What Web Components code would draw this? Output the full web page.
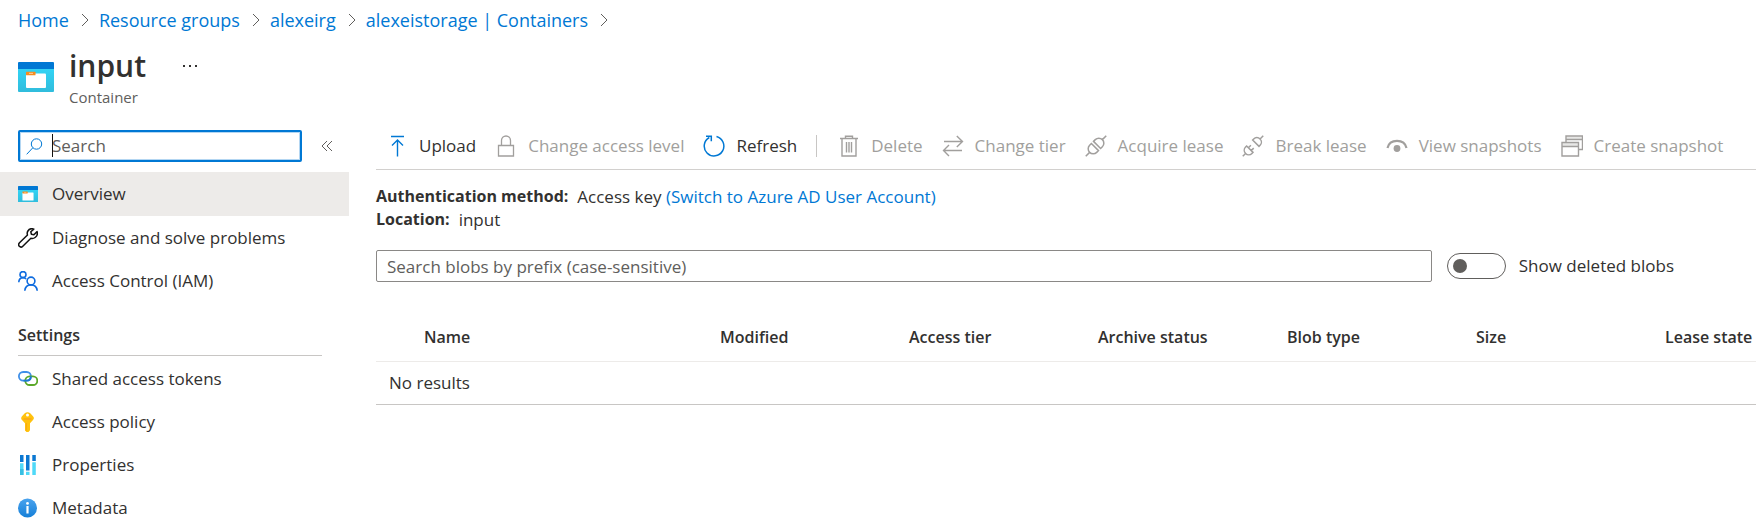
<!DOCTYPE html>
<html lang="en">
<head>
<meta charset="utf-8">
<title>input - Container</title>
<style>
html { scrollbar-width: none; }
body { margin: 0; background: #fff; color: #323130; font: 17px/24px "Open Sans", "Noto Sans", sans-serif; }
</style>
</head>
<body>
<portal-page></portal-page>
<script>
const ICONS = {
  container: ['0 0 36 30', `<defs><linearGradient id="g" x2="0" y2="1"><stop stop-color="#32d4f5"/><stop offset="1" stop-color="#30bcdc"/></linearGradient></defs><g stroke="none"><rect y="6" width="36" height="24" rx="1" fill="url(#g)"/><path d="M1 0h34a1 1 0 0 1 1 1v6H0V1a1 1 0 0 1 1-1z" fill="#0078d4"/><path d="M17 11.500H27a1 1 0 0 1 1 1V25a1 1 0 0 1-1 1H9a1 1 0 0 1-1-1V12z" fill="#fff"/><rect x="8" y="9.700" width="9.500" height="3.600" rx=".6" fill="#f78d1e"/><path d="M11 10.800h4v1.200h-4z" fill="#fcc48a"/></g>`],
  search: ['0 0 17 17', `<circle cx="10.500" cy="6" r="5.200"/><path d="M6.800 9.800.7 16.300"/>`],
  collapse: ['0 0 12 12', `<path d="M6 1 1 6l5 5M11 1 6 6l5 5"/>`],
  chevron: ['0 0 8 14', `<path d="M1 1l6 6-6 6"/>`],
  dots: ['0 0 16 4', `<g fill="currentColor" stroke="none"><rect x="1" y="1" width="2" height="2"/><rect x="7" y="1" width="2" height="2"/><rect x="13" y="1" width="2" height="2"/></g>`],
  wrench: ['0 0 20 20', `<g stroke-width="1.500" stroke-linejoin="round"><path d="M15.800 1.100c-2.200-.8-4.700-.1-5.900 1.900-.8 1.300-.9 2.700-.4 4L1.500 14.700c-1.200 1.200-1 2.800-.2 3.600.9.900 2.400 1 3.500-.1l8.100-7.900c1.400.4 3 .1 4.200-.8 2-1.400 2.700-3.600 2-5.900l-3.200 3.100-2.500-.5-.6-2.400z"/></g>`],
  people: ['0 0 20 20', `<g stroke="#0f6cdf" stroke-width="1.600"><circle cx="5" cy="3.600" r="3"/><path d="M.8 11.200c0-2.700 1.700-4.600 4.200-4.600 1.300 0 2.400.5 3.100 1.400"/><circle cx="13" cy="10" r="3.900"/><path d="M6.800 19.800c.3-3.500 2.800-5.900 6.200-5.900s5.900 2.400 6.200 5.900"/></g>`],
  link: ['0 0 20 15', `<g stroke-width="1.800"><rect x=".9" y="1" width="12" height="8.600" rx="4.300" stroke="#3f8fe8"/><rect x="7.300" y="5.400" width="12" height="8.600" rx="4.300" stroke="#5ba829"/><path d="M12.900 5.300c0 2.700-1.600 4.300-4 4.300H5.500" stroke="#1b78d4"/></g>`],
  key: ['0 0 20 20', `<g stroke="none"><path d="M6.500 1.500Q9.500-1 12.500 1.500L15 4.200q1.800 1.800 0 3.800L12 11.300v7L10.500 20h-2L7 18.500v-7.200L4 8Q2.300 6.200 4 4.300z" fill="#ffc20e"/><path d="M5.500 6.300h8v1.400h-8z" fill="#f9a21a"/><path d="M7.800 11h1.200v7.500H7.800z" fill="#f79b12" opacity=".6"/><circle cx="9.500" cy="2.900" r="1.500" fill="#fff"/></g>`],
  properties: ['0 0 20 20', `<g stroke="none"><path d="M2 0h3.500v7H2zM8 0h3.500v15.500H8zM14.300 0h3.500v6h-3.500z" fill="#0b78d2"/><path d="M2 8.300h3.500V20H2zM14.300 7.300h3.500V20h-3.500zM8 16.800h3.500V20H8z" fill="#4fd9f8"/><path d="M2 14h3.500v6H2z" fill="#38bfe2"/></g>`],
  info: ['0 0 20 20', `<defs><linearGradient id="g" x2="0" y2="1"><stop stop-color="#4aa3ee"/><stop offset="1" stop-color="#157fd8"/></linearGradient></defs><g stroke="none"><circle cx="9.500" cy="10" r="9.500" fill="url(#g)"/><circle cx="9.500" cy="5.400" r="1.400" fill="#fff"/><path d="M8.400 8h2.200v7.500H8.400z" fill="#fff"/></g>`],
  upload: ['0 0 22 22', `<path d="M5 1.500h13M11.500 21.500V5M6 10.500 11.500 5l5.500 5.500" stroke-width="1.400"/>`],
  lock: ['0 0 22 22', `<path d="M3.500 10.500h15v10.500h-15zM6.500 10.500V5.500a4.500 4.500 0 0 1 9 0v5" stroke-width="1.300"/>`],
  refresh: ['0 0 22 22', `<path d="M13.500 1.600A9.800 9.800 0 1 1 6.300 2.500M3 1.200h5.300v5" stroke-width="1.500"/>`],
  trash: ['0 0 22 22', `<path d="M2 3.500h18M7.500 3.500V1.200h7v2.300M4 3.500V21h14V3.500M8.500 7v10.500M11 7v10.500M13.500 7v10.500" stroke-width="1.400"/>`],
  swap: ['0 0 22 22', `<path d="M2 6.500h18.500M14.800.9l5.700 5.600-5.700 5.500M20 15.500H1.500M7 10l-5.500 5.500L7 21" stroke-width="1.400"/>`],
  plug: ['0 0 22 22', `<g transform="rotate(-45 11 11)" stroke-width="1.500"><path d="M9.500 6H7a5 5 0 0 0 0 10h2.500zM12.500 6H15a5 5 0 0 1 0 10h-2.500zM-3.500 11H2M20 11h5.500"/></g>`],
  unplug: ['0 0 22 22', `<g transform="rotate(-45 11 11)" stroke-width="1.500"><path d="M6.500 6.500H5a4.500 4.500 0 0 0 0 9h1.500zM15 6.500h1.500a4.500 4.500 0 0 1 0 9H15zM-3.500 11H.5M21 11h4.500M6.500 9H10M6.500 13H10"/></g>`],
  eye: ['0 0 22 22', `<path d="M1.500 13C2.500 8.400 6.200 5.800 11 5.800s8.500 2.600 9.500 7.200" stroke-width="2.200"/><circle cx="11" cy="13.500" r="3.400" fill="currentColor" stroke="none"/>`],
  windows: ['0 0 22 22', `<path d="M1 7.500h16.500V21H1zM1 11.500h16.500M5 7.500V1h16.500v13.500h-4M5 4.500h16.500" stroke-width="1.400"/><path d="M1.500 8h15.500v3H1.500zM5.500 1.500h15.500V4H5.500z" fill="currentColor" stroke="none" opacity=".25"/>`]
};

const define = (name, html, setup) => {
  const template = document.createElement('template');
  template.innerHTML = html;
  customElements.define(name, class extends HTMLElement {
    constructor() {
      super();
      this.attachShadow({ mode: 'open' }).append(template.content.cloneNode(true));
    }
    connectedCallback() { if (setup) setup(this, this.shadowRoot); }
  });
};

define('az-icon', `<style>
:host { display: block; flex: none; line-height: 0; }
svg { display: block; width: 100%; }
</style><span></span>`, (host, root) => {
  const [box, body] = ICONS[host.getAttribute('name')];
  root.querySelector('span').innerHTML = `<svg viewBox="${box}" fill="none" stroke="currentColor" aria-hidden="true">${body}</svg>`;
});

// Puts the icon named by the host's "icon" attribute in front of its label.
const leadIcon = (host, target) => {
  if (target.querySelector('az-icon')) return;
  const icon = document.createElement('az-icon');
  icon.setAttribute('name', host.getAttribute('icon'));
  target.prepend(icon);
};

define('az-crumb', `<style>
:host { display: flex; align-items: center; gap: 12px; }
a { color: #0078d4; text-decoration: none; white-space: nowrap; }
az-icon { width: 8px; color: #605e5c; }
</style><a href="#"><slot></slot></a><az-icon name="chevron"></az-icon>`);

define('az-breadcrumb', `<style>
:host { display: block; }
nav { display: flex; gap: 10px; padding: 8px 18px; font-size: 18px; }
</style><nav aria-label="Breadcrumb"><slot></slot></nav>`);

define('az-title', `<style>
:host { display: flex; gap: 15px; padding: 6px 18px 0; }
az-icon.logo { width: 36px; margin-top: 16px; }
h1 { margin: 0; font-size: 30px; line-height: 40px; font-weight: 600; }
p { margin: 0; font-size: 15px; line-height: 22px; color: #605e5c; }
button { align-self: flex-start; margin: 14px 0 0 21px; padding: 4px 0; border: 0; background: none; color: #323130; }
button az-icon { width: 16px; }
</style><az-icon class="logo" name="container"></az-icon>
<div><h1><slot></slot></h1><p><slot name="kind"></slot></p></div>
<button aria-label="More"><az-icon name="dots"></az-icon></button>`);

define('az-menu-search', `<style>
:host { display: flex; align-items: center; justify-content: space-between; padding: 0 16px 0 18px; }
label { position: relative; display: flex; align-items: center; box-sizing: border-box; width: 284px; height: 32px; border: 2px solid #0078d4; border-radius: 2px; box-shadow: inset 0 0 0 1px #b3d6f2; padding-left: 6px; gap: 9px; }
label az-icon { width: 17px; color: #0078d4; }
input { flex: 1; min-width: 0; border: 0; padding: 0; outline: 0; background: none; font: inherit; color: #323130; }
input::placeholder { color: #605e5c; opacity: 1; }
.caret { position: absolute; left: 32px; top: 2px; width: 1px; height: 23px; background: #111; }
button { border: 0; background: none; padding: 0; color: #605e5c; }
button az-icon { width: 12px; }
</style><label><az-icon name="search"></az-icon><input type="text" placeholder="Search" aria-label="Search menu"><span class="caret"></span></label>
<button aria-label="Collapse menu"><az-icon name="collapse"></az-icon></button>`);

define('az-menu-item', `<style>
:host { display: block; }
a { display: flex; align-items: center; gap: 14px; height: 43px; padding: 0 18px; color: inherit; text-decoration: none; white-space: nowrap; }
az-icon { width: 20px; color: #111; }
:host([selected]) a { height: 44px; background: #edebe9; }
</style><a href="#"><slot></slot></a>`, (host, root) => leadIcon(host, root.querySelector('a')));

define('az-menu', `<style>
:host { display: block; }
nav { padding-top: 10px; }
h2 { margin: 21px 27px 1px 18px; padding-bottom: 8px; border-bottom: 1px solid #c8c6c4; font-size: 16px; line-height: 24px; font-weight: 600; }
</style><az-menu-search></az-menu-search>
<nav><slot></slot><h2>Settings</h2><slot name="settings"></slot></nav>`);

define('az-command', `<style>
:host { display: block; flex: none; }
button { display: flex; align-items: center; gap: 11px; border: 0; padding: 0; background: none; font: inherit; color: #323130; white-space: nowrap; }
az-icon { width: 22px; color: #0078d4; }
button:disabled, button:disabled az-icon { color: #a19f9d; }
</style><button><slot></slot></button>`, (host, root) => {
  const button = root.querySelector('button');
  leadIcon(host, button);
  button.disabled = host.hasAttribute('disabled');
});

define('az-toolbar', `<style>
:host { display: flex; align-items: center; gap: 19px; height: 47px; padding-left: 10px; border-bottom: 1px solid #d2d0ce; }
</style><slot></slot>`);

define('az-divider', `<style>:host { display: block; width: 1px; height: 22px; margin-right: 2px; background: #c8c6c4; }</style>`);

define('az-facts', `<style>
:host { display: block; padding-top: 15px; line-height: 23px; }
dl, dd { margin: 0; }
div { display: flex; gap: 9px; }
dt { font-size: 16px; font-weight: 700; }
a { color: #0078d4; text-decoration: none; }
</style><dl><div><dt>Authentication method:</dt><dd>Access key <a href="#">(Switch to Azure AD User Account)</a></dd></div>
<div><dt>Location:</dt><dd>input</dd></div></dl>`);

define('az-toggle', `<style>
:host { display: block; }
label { display: flex; align-items: center; gap: 13px; white-space: nowrap; }
input { appearance: none; display: grid; align-items: center; box-sizing: border-box; width: 59px; height: 26px; margin: 0; padding: 0 5px; border: 1px solid #605e5c; border-radius: 13px; }
input::before { content: ""; width: 14px; height: 14px; border-radius: 50%; background: #605e5c; }
input:checked::before { justify-self: end; }
</style><label><input type="checkbox" role="switch"><slot></slot></label>`);

define('blob-filter', `<style>
:host { display: flex; align-items: center; gap: 15px; padding: 19px 82px 0 0; }
.prefix { flex: 1; min-width: 0; box-sizing: border-box; height: 32px; border: 1px solid #8a8886; border-radius: 2px; padding: 0 10px; font: inherit; color: #323130; }
.prefix::placeholder { color: #605e5c; opacity: 1; }
</style><input class="prefix" type="text" placeholder="Search blobs by prefix (case-sensitive)" aria-label="Search blobs by prefix">
<az-toggle>Show deleted blobs</az-toggle>`);

define('blob-table', `<style>
:host { display: block; overflow: hidden; padding-top: 31px; }
table { table-layout: fixed; width: 100%; min-width: 1478px; border-collapse: collapse; }
th { height: 48px; padding: 0; text-align: left; font-size: 16px; font-weight: 600; white-space: nowrap; border-bottom: 1px solid #edebe9; }
td { height: 42px; padding: 0 13px; border-bottom: 1px solid #c8c6c4; }
.pick { width: 48px; }
.name { width: 296px; }
</style><table>
<colgroup><col class="pick"><col class="name"><col><col><col><col><col><col></colgroup>
<thead><tr><th></th><th>Name</th><th>Modified</th><th>Access tier</th><th>Archive status</th><th>Blob type</th><th>Size</th><th>Lease state</th></tr></thead>
<tbody><tr><td colspan="8">No results</td></tr></tbody></table>`);

define('portal-page', `<style>
:host { display: block; overflow: hidden; }
.body { display: grid; grid-template-columns: 349px minmax(0, 1fr); column-gap: 27px; }
aside { padding-top: 22px; }
main { padding-top: 14px; }
</style>
<az-breadcrumb><az-crumb>Home</az-crumb><az-crumb>Resource groups</az-crumb><az-crumb>alexeirg</az-crumb><az-crumb>alexeistorage | Containers</az-crumb></az-breadcrumb>
<az-title>input<span slot="kind">Container</span></az-title>
<div class="body">
<aside><az-menu>
<az-menu-item icon="container" selected>Overview</az-menu-item>
<az-menu-item icon="wrench">Diagnose and solve problems</az-menu-item>
<az-menu-item icon="people">Access Control (IAM)</az-menu-item>
<az-menu-item slot="settings" icon="link">Shared access tokens</az-menu-item>
<az-menu-item slot="settings" icon="key">Access policy</az-menu-item>
<az-menu-item slot="settings" icon="properties">Properties</az-menu-item>
<az-menu-item slot="settings" icon="info">Metadata</az-menu-item>
</az-menu></aside>
<main>
<az-toolbar>
<az-command icon="upload">Upload</az-command>
<az-command icon="lock" disabled>Change access level</az-command>
<az-command icon="refresh">Refresh</az-command>
<az-divider></az-divider>
<az-command icon="trash" disabled>Delete</az-command>
<az-command icon="swap" disabled>Change tier</az-command>
<az-command icon="plug" disabled>Acquire lease</az-command>
<az-command icon="unplug" disabled>Break lease</az-command>
<az-command icon="eye" disabled>View snapshots</az-command>
<az-command icon="windows" disabled>Create snapshot</az-command>
</az-toolbar>
<az-facts></az-facts>
<blob-filter></blob-filter>
<blob-table></blob-table>
</main>
</div>`);
</script>
</body>
</html>
